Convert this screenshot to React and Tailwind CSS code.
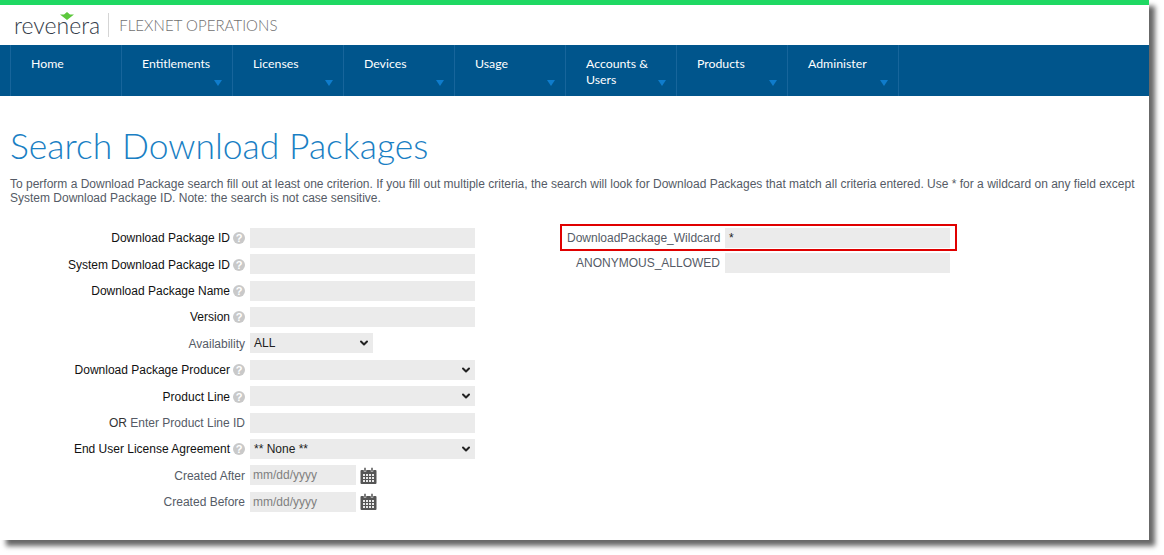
import { ChevronDown } from 'lucide-react';

const navItems = [
  { label: 'Home' },
  { label: 'Entitlements', arrow: true },
  { label: 'Licenses', arrow: true },
  { label: 'Devices', arrow: true },
  { label: 'Usage', arrow: true },
  { label: 'Accounts & Users', arrow: true },
  { label: 'Products', arrow: true },
  { label: 'Administer', arrow: true },
];

const fields = [
  { label: 'Download Package ID', help: true, type: 'text' },
  { label: 'System Download Package ID', help: true, type: 'text' },
  { label: 'Download Package Name', help: true, type: 'text' },
  { label: 'Version', help: true, type: 'text' },
  { label: 'Availability', type: 'select', value: 'ALL', width: 'w-[123px]' },
  { label: 'Download Package Producer', help: true, type: 'select' },
  { label: 'Product Line', help: true, type: 'select' },
  { label: 'Enter Product Line ID', prefix: 'OR', type: 'text' },
  { label: 'End User License Agreement', help: true, type: 'select', value: '** None **' },
  { label: 'Created After', type: 'date' },
  { label: 'Created Before', type: 'date' },
];

function HelpIcon() {
  return (
    <span className="w-[12px] h-[12px] rounded-full bg-[#c9c9c9] text-white text-[11px] leading-[12px] font-bold text-center">?</span>
  );
}

function CalendarIcon() {
  return (
    <svg width="17" height="17" viewBox="0 0 17 17" className="ml-[4px]">
      <path d="M0.5 4a1 1 0 0 1 1-1h14a1 1 0 0 1 1 1v12a1 1 0 0 1-1 1h-14a1 1 0 0 1-1-1z" fill="#555" />
      <rect x="4" y="0.5" width="2" height="4" fill="#555" stroke="#fff" strokeWidth="0.5" />
      <rect x="11" y="0.5" width="2" height="4" fill="#555" stroke="#fff" strokeWidth="0.5" />
      {[7, 10, 13].map((y) =>
        [3, 6, 9, 12].map((x) => <rect key={`${x}-${y}`} x={x} y={y} width="2" height="2" fill="#e8e8e8" />)
      )}
    </svg>
  );
}

function Field({ f }) {
  if (f.type === 'select') {
    return (
      <div className={`h-[20px] bg-[#ebebeb] flex items-center justify-between pl-[4px] pr-[3px] text-[12px] text-[#222] ${f.width || 'w-[225px]'}`}>
        <span>{f.value}</span>
        <ChevronDown className="w-[12px] h-[12px] text-[#222]" strokeWidth={4} />
      </div>
    );
  }
  if (f.type === 'date') {
    return (
      <div className="flex items-center">
        <div className="w-[106px] h-[20px] bg-[#ebebeb] pl-[3px] text-[12px] leading-[20px] text-[#808080]">mm/dd/yyyy</div>
        <CalendarIcon />
      </div>
    );
  }
  return <div className="w-[225px] h-[20px] bg-[#ebebeb]" />;
}

export default function App() {
  return (
    <div className="w-[1164px] h-[555px] bg-white font-['Liberation_Sans',Arial,sans-serif] overflow-hidden">
      <div className="w-[1149px] h-[540px] bg-white shadow-[6px_6px_5px_rgba(0,0,0,0.6)]">
        <div className="h-[5px] bg-[#1fd863]" />
        {/* logo bar */}
        <div className="h-[40px] flex items-center pl-[14px]">
          <div className="relative font-['Lato',sans-serif] font-light text-[23px] leading-none text-[#333b47]">
            <svg width="14" height="8" viewBox="0 0 14 8" className="absolute left-[46px] -top-[2px]">
              <path d="M7 8 L0 2.5 L4 2.5 L7 0 L10 2.5 L14 2.5 Z" fill="#5cc83c" />
            </svg>
            revenera
          </div>
          <div className="w-px h-[24px] bg-[#d5d5d5] ml-[8px] mr-[10px]" />
          <div className="font-['Lato',sans-serif] font-light text-[15px] text-[#6f6f6f] tracking-[0.05px]">FLEXNET OPERATIONS</div>
        </div>
        {/* nav */}
        <nav className="h-[51px] bg-[#00558c] flex pl-[10px]">
          {navItems.map((item) => (
            <div key={item.label} className="relative w-[111px] last:w-[112px] border-l border-[#17659b] last:border-r pl-[20px] pr-[25px] pt-[11px] font-['Lato',sans-serif] text-[12.3px] leading-[16px] text-white">
              {item.label}
              {item.arrow && (
                <span className="absolute right-[10px] bottom-[10px] w-0 h-0 border-x-[4px] border-x-transparent border-t-[6px] border-t-[#0f7ccc]" />
              )}
            </div>
          ))}
        </nav>
        <div className="px-[10px]">
          <h1 className="mt-[28px] font-['Lato',sans-serif] font-light text-[35.5px] leading-[44px] text-[#1a7fc4]">Search Download Packages</h1>
          <p className="mt-[9px] text-[12px] leading-[14px] text-[#555b66]">
            To perform a Download Package search fill out at least one criterion. If you fill out multiple criteria, the search will look for Download Packages that match all criteria entered. Use * for a wildcard on any field except System Download Package ID. Note: the search is not case sensitive.
          </p>
          <div className="mt-[22.8px] flex">
            <div className="grid grid-cols-[240px_auto] gap-y-[6.4px] w-[557px] content-start">
              {fields.map((f) => (
                <div key={f.label} className="contents">
                  <div className={`h-[20px] flex items-center justify-end gap-[3px] pr-[5px] pt-[1px] text-[12px] whitespace-nowrap ${f.help ? 'text-[#111]' : 'text-[#555b66]'}`}>
                    <span>
                      {f.prefix && <span className="text-[#333]">{f.prefix} </span>}
                      {f.label}
                    </span>
                    {f.help && <HelpIcon />}
                  </div>
                  <Field f={f} />
                </div>
              ))}
            </div>
            <div className="flex flex-col gap-[5px]">
              <div className="relative flex items-center w-[383px] h-[20px]">
                <span className="absolute -left-[7px] -right-[7px] -top-[4px] -bottom-[3px] border-2 border-[#e00000]" />
                <span className="w-[158px] text-right pr-[5px] text-[12px] text-[#555b66]">DownloadPackage_Wildcard</span>
                <div className="w-[225px] h-[20px] bg-[#ebebeb] pl-[4px] text-[12px] leading-[20px] text-[#222]">*</div>
              </div>
              <div className="flex items-center w-[383px] h-[20px]">
                <span className="w-[158px] text-right pr-[5px] text-[12px] text-[#555b66]">ANONYMOUS_ALLOWED</span>
                <div className="w-[225px] h-[20px] bg-[#ebebeb]" />
              </div>
            </div>
          </div>
        </div>
      </div>
    </div>
  );
}
